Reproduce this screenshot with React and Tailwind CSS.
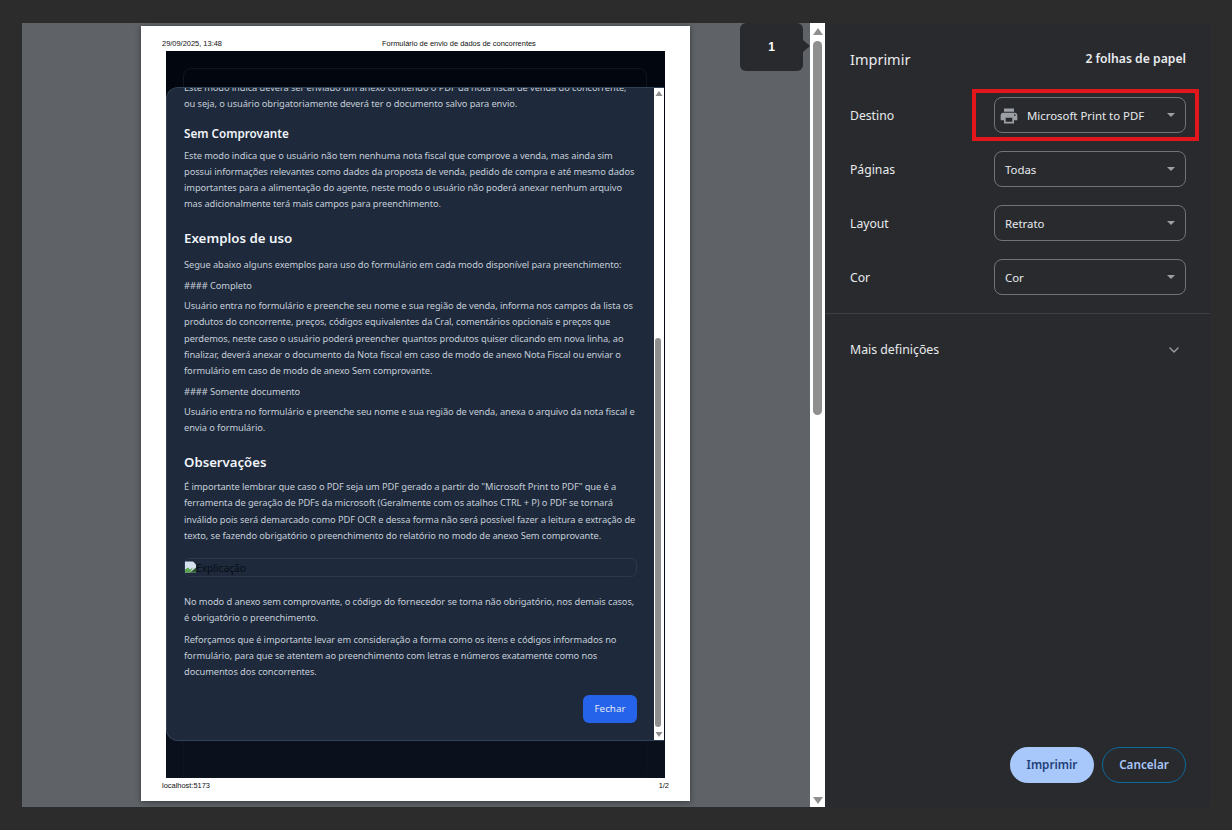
import React from 'react'
import { ChevronDown } from 'lucide-react'

const font = { fontFamily: '"Noto Sans", "Open Sans", sans-serif' }

const Para = ({ lines, className = '' }) => (
  <div className={`text-[9.3px] tracking-[-0.09px] leading-[16.25px] text-[#c5ced9] ${className}`}>
    {lines.map((line) => (
      <div key={line} className="whitespace-nowrap">{line}</div>
    ))}
  </div>
)

const Caret = () => (
  <svg width="8" height="4" viewBox="0 0 8 4" className="shrink-0">
    <path d="M0 0h8L4 4z" fill="#9aa0a6" />
  </svg>
)

const PrinterIcon = () => (
  <svg width="20" height="20" viewBox="0 0 24 24" className="shrink-0 -ml-[1px]" fill="#9aa0a6">
    <path d="M19 8H5c-1.66 0-3 1.34-3 3v6h4v4h12v-4h4v-6c0-1.66-1.34-3-3-3zm-3 11H8v-5h8v5zm3-7c-.55 0-1-.45-1-1s.45-1 1-1 1 .45 1 1-.45 1-1 1zm-1-9H6v4h12V3z" />
  </svg>
)

const SelectRow = ({ label, value, icon }) => (
  <div className="flex items-center h-[36px] mb-[18px]">
    <div className="w-[144px] pt-[2px] text-[12.2px] text-[#e8eaed]">{label}</div>
    <div className="w-[192px] h-[36px] flex items-center justify-between rounded-lg border border-[#70747a] pl-[5px] pr-[10px]">
      <div className="flex items-center gap-[8px] pt-[1px] text-[11.4px] text-[#e8eaed]">
        {icon ? <PrinterIcon /> : null}
        <span className={icon ? '' : 'pl-[5px]'}>{value}</span>
      </div>
      <Caret />
    </div>
  </div>
)

const ScrollArrow = ({ down, size = 'big' }) => (
  <svg width={size === 'big' ? 10 : 8} height={size === 'big' ? 7 : 5} viewBox="0 0 10 7" className="shrink-0">
    <path d={down ? 'M0 0h10L5 7z' : 'M0 7h10L5 0z'} fill="#8f8f8f" />
  </svg>
)

const Modal = () => (
  <div className="absolute left-0 right-[1px] top-[36px] h-[654px] flex overflow-hidden rounded-l-xl border-y border-l border-[#334155] bg-[#1e293b]">
    <div className="flex-1 overflow-hidden pl-[17px] pr-[17px]">
      <div className="-mt-[8px]">
        <Para lines={[
          'Este modo indica deverá ser enviado um anexo contendo o PDF da nota fiscal de venda do concorrente,',
          'ou seja, o usuário obrigatoriamente deverá ter o documento salvo para envio.',
        ]} />
        <div className="mt-[11px] text-[11.7px] leading-[18px] font-semibold text-[#f1f5f9]">Sem Comprovante</div>
        <Para className="mt-[6px]" lines={[
          'Este modo indica que o usuário não tem nenhuma nota fiscal que comprove a venda, mas ainda sim',
          'possui informações relevantes como dados da proposta de venda, pedido de compra e até mesmo dados',
          'importantes para a alimentação do agente, neste modo o usuário não poderá anexar nenhum arquivo',
          'mas adicionalmente terá mais campos para preenchimento.',
        ]} />
        <div className="mt-[15px] text-[13.3px] leading-[20px] font-semibold text-[#f1f5f9]">Exemplos de uso</div>
        <Para className="mt-[9px]" lines={['Segue abaixo alguns exemplos para uso do formulário em cada modo disponível para preenchimento:']} />
        <Para className="mt-[5px]" lines={['#### Completo']} />
        <Para className="mt-[4px]" lines={[
          'Usuário entra no formulário e preenche seu nome e sua região de venda, informa nos campos da lista os',
          'produtos do concorrente, preços, códigos equivalentes da Cral, comentários opcionais e preços que',
          'perdemos, neste caso o usuário poderá preencher quantos produtos quiser clicando em nova linha, ao',
          'finalizar, deverá anexar o documento da Nota fiscal em caso de modo de anexo Nota Fiscal ou enviar o',
          'formulário em caso de modo de anexo Sem comprovante.',
        ]} />
        <Para className="mt-[5px]" lines={['#### Somente documento']} />
        <Para className="mt-[3px]" lines={[
          'Usuário entra no formulário e preenche seu nome e sua região de venda, anexa o arquivo da nota fiscal e',
          'envia o formulário.',
        ]} />
        <div className="mt-[16px] text-[13.2px] leading-[20px] font-semibold text-[#f1f5f9]">Observações</div>
        <Para className="mt-[7px]" lines={[
          'É importante lembrar que caso o PDF seja um PDF gerado a partir do "Microsoft Print to PDF" que é a',
          'ferramenta de geração de PDFs da microsoft (Geralmente com os atalhos CTRL + P) o PDF se tornará',
          'inválido pois será demarcado como PDF OCR e dessa forma não será possível fazer a leitura e extração de',
          'texto, se fazendo obrigatório o preenchimento do relatório no modo de anexo Sem comprovante.',
        ]} />
        <div className="mt-[14px] h-[19px] w-[453px] flex items-center rounded-md border border-[#2a3850] text-[10.2px] text-[#070c16]">
          <svg width="11" height="12" viewBox="0 0 11 11" className="shrink-0 -mt-[2px]">
            <path d="M0 0h8l3 3v8H0z" fill="#d5e0ee" />
            <path d="M0 11V8l3-2 2 2 3-2-3 5z" fill="#5aa64f" />
            <path d="M5 11l6-5v5z" fill="#2c5a2c" />
          </svg>
          <span className="pt-[2px]">Explicação</span>
        </div>
        <Para className="mt-[17px]" lines={[
          'No modo d anexo sem comprovante, o código do fornecedor se torna não obrigatório, nos demais casos,',
          'é obrigatório o preenchimento.',
        ]} />
        <Para className="mt-[5px]" lines={[
          'Reforçamos que é importante levar em consideração a forma como os itens e códigos informados no',
          'formulário, para que se atentem ao preenchimento com letras e números exatamente como nos',
          'documentos dos concorrentes.',
        ]} />
        <div className="mt-[15px] flex justify-end w-[453px]">
          <div className="w-[54px] h-[28px] pt-[1px] flex items-center justify-center rounded-md bg-[#2563eb] text-[9.8px] text-[#e2e8f0]">Fechar</div>
        </div>
      </div>
    </div>
    <div className="w-[10px] bg-white flex flex-col items-center justify-between py-[3px] relative">
      <ScrollArrow size="small" />
      <div className="absolute left-[1px] top-[250px] w-[6px] h-[389px] rounded-full bg-[#8f8f8f]" />
      <ScrollArrow size="small" down />
    </div>
  </div>
)

const Paper = () => (
  <div className="mt-[3px] ml-[119px] w-[549px] h-[775px] bg-white flex flex-col shadow-[0_1px_6px_rgba(0,0,0,0.45)]" style={{ fontFamily: '"Liberation Sans", Arial, sans-serif' }}>
    <div className="h-[25px] relative px-[21px] flex items-center justify-between pt-[10px] text-[7.45px] text-[#111]">
      <span>29/09/2025, 13:48</span>
      <span className="absolute left-[241px] top-[12px]">Formulário de envio de dados de concorrentes</span>
    </div>
    <div className="relative mx-[25px] flex-1 bg-gradient-to-b from-[#02060f] to-[#0b101d]" style={font}>
      <div className="absolute left-[17px] right-[18px] top-[17px] bottom-0 rounded-t-lg border border-[#0f1520]" />
      <Modal />
    </div>
    <div className="h-[23px] flex items-center justify-between px-[21px] pb-[8px] text-[7.45px] text-[#111]">
      <span>localhost:5173</span>
      <span>1/2</span>
    </div>
  </div>
)

const App = () => {
  return (
    <div className="w-[1232px] h-[830px] overflow-hidden bg-[#2c2c2c] pl-[22px] pt-[23px]">
      <div className="flex w-[1188px] h-[784px]">
        {/* preview */}
        <div className="relative w-[788px] bg-[#5f6368]">
          <Paper />
          <div className="absolute right-[7px] top-0 w-[63px] h-[48px] rounded-md bg-[#292a2d] flex items-center justify-center text-[12px] font-bold text-white" style={{ fontFamily: '"Liberation Sans", Arial, sans-serif' }}>1</div>
          <div className="absolute right-0 top-[17px] w-0 h-0 border-y-[6px] border-y-transparent border-l-[7px] border-l-[#292a2d]" />
        </div>
        {/* main scrollbar */}
        <div className="relative w-[15px] bg-white flex flex-col items-center justify-between pt-[5px] pb-[3px]">
          <ScrollArrow />
          <div className="absolute left-[3px] top-[18px] w-[9px] h-[374px] rounded-full bg-[#8f8f8f]" />
          <ScrollArrow down />
        </div>
        {/* sidebar */}
        <div className="relative w-[385px] bg-[#292a2d] flex flex-col" style={font}>
          <div className="px-[25px] pr-[24px] pt-[26px] flex items-center justify-between">
            <span className="text-[14.5px] leading-[20px] text-[#e8eaed]">Imprimir</span>
            <span className="text-[12.2px] leading-[20px] font-semibold text-[#e8eaed]">2 folhas de papel</span>
          </div>
          <div className="pl-[25px] pt-[28px]">
            <SelectRow label="Destino" value="Microsoft Print to PDF" icon />
            <SelectRow label="Páginas" value="Todas" />
            <SelectRow label="Layout" value="Retrato" />
            <SelectRow label="Cor" value="Cor" />
          </div>
          <div className="border-t border-[#3f4043]" />
          <div className="pl-[25px] pr-[28px] pt-[26px] flex items-center justify-between text-[12.3px] leading-[20px] text-[#e8eaed]">
            <span>Mais definições</span>
            <ChevronDown size={16} color="#9aa0a6" />
          </div>
          <div className="mt-auto mb-[24px] pr-[24px] flex justify-end gap-[8px] text-[11.7px] font-semibold">
            <div className="w-[84px] h-[36px] rounded-full bg-[#a8c7fa] text-[#1f3f78] flex items-center justify-center">Imprimir</div>
            <div className="w-[84px] h-[36px] rounded-full border border-[#0b6aa0] text-[#a8c7fa] flex items-center justify-center">Cancelar</div>
          </div>
          <div className="absolute left-[147px] top-[66px] w-[227px] h-[52px] border-4 border-[#e3161c]" />
        </div>
      </div>
    </div>
  )
}

export default App
